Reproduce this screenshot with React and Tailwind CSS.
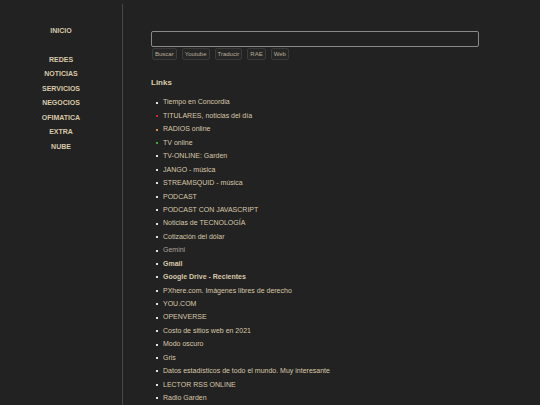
const menu = ['REDES', 'NOTICIAS', 'SERVICIOS', 'NEGOCIOS', 'OFIMATICA', 'EXTRA', 'NUBE'];

const buttons = ['Buscar', 'Youtube', 'Traducir', 'RAE', 'Web'];

const links = [
  { label: 'Tiempo en Concordia' },
  { label: 'TITULARES, noticias del día', dot: 'bg-[#c0302a]' },
  { label: 'RADIOS online', dot: 'bg-[#e08a4a]' },
  { label: 'TV online', dot: 'bg-[#3faa3a]' },
  { label: 'TV-ONLINE: Garden' },
  { label: 'JANGO - música' },
  { label: 'STREAMSQUID - música' },
  { label: 'PODCAST' },
  { label: 'PODCAST CON JAVASCRIPT' },
  { label: 'Noticias de TECNOLOGÍA' },
  { label: 'Cotización del dólar' },
  { label: 'Gemini', muted: true },
  { label: 'Gmail', bold: true },
  { label: 'Google Drive - Recientes', bold: true },
  { label: 'PXhere.com. Imágenes libres de derecho' },
  { label: 'YOU.COM' },
  { label: 'OPENVERSE' },
  { label: 'Costo de sitios web en 2021' },
  { label: 'Modo oscuro' },
  { label: 'Gris' },
  { label: 'Datos estadísticos de todo el mundo. Muy interesante' },
  { label: 'LECTOR RSS ONLINE' },
  { label: 'Radio Garden' },
];

export default function App() {
  return (
    <div
      className="flex h-[405px] w-[540px] overflow-hidden bg-[#222222] text-[#d8c8a8]"
      style={{ fontFamily: '"Liberation Sans", Arial, sans-serif' }}
    >
      {/* sidebar */}
      <aside className="mt-[4px] flex w-[123px] shrink-0 flex-col items-center border-r border-[#484848] pt-[20px] text-[7px] font-bold">
        <a className="leading-[14.5px]">INICIO</a>
        <nav className="mt-[14px] flex flex-col items-center">
          {menu.map((m) => (
            <a key={m} className="leading-[14.6px]">
              {m}
            </a>
          ))}
        </nav>
      </aside>

      {/* main */}
      <main className="flex-1 pl-[28px] pt-[31px]">
        <input
          type="text"
          className="block h-[16px] w-[328px] rounded-[2px] border border-[#8a8a8a] bg-transparent outline-none"
        />
        <div className="mt-[1px] flex gap-[5px] pl-[1px]">
          {buttons.map((b) => (
            <button
              key={b}
              className="h-[12px] rounded-[2px] border border-[#3a3a3a] bg-[#262626] px-[2px] text-[6px] leading-[10px] text-[#b8ad98]"
            >
              {b}
            </button>
          ))}
        </div>

        <h2 className="mt-[18px] text-[8px] font-bold leading-[10px]">Links</h2>

        <ul className="mt-[8px] flex flex-col">
          {links.map((l) => (
            <li key={l.label} className="flex h-[13.45px] items-center pl-[5px] text-[7px]">
              <span className={`mr-[5px] h-[2px] w-[2px] ${l.dot || 'bg-[#e8e0d0]'}`} />
              <span
                className={
                  l.bold ? 'font-bold' : l.muted ? 'text-[#a8a29a]' : ''
                }
              >
                {l.label}
              </span>
            </li>
          ))}
        </ul>
      </main>
    </div>
  );
}
